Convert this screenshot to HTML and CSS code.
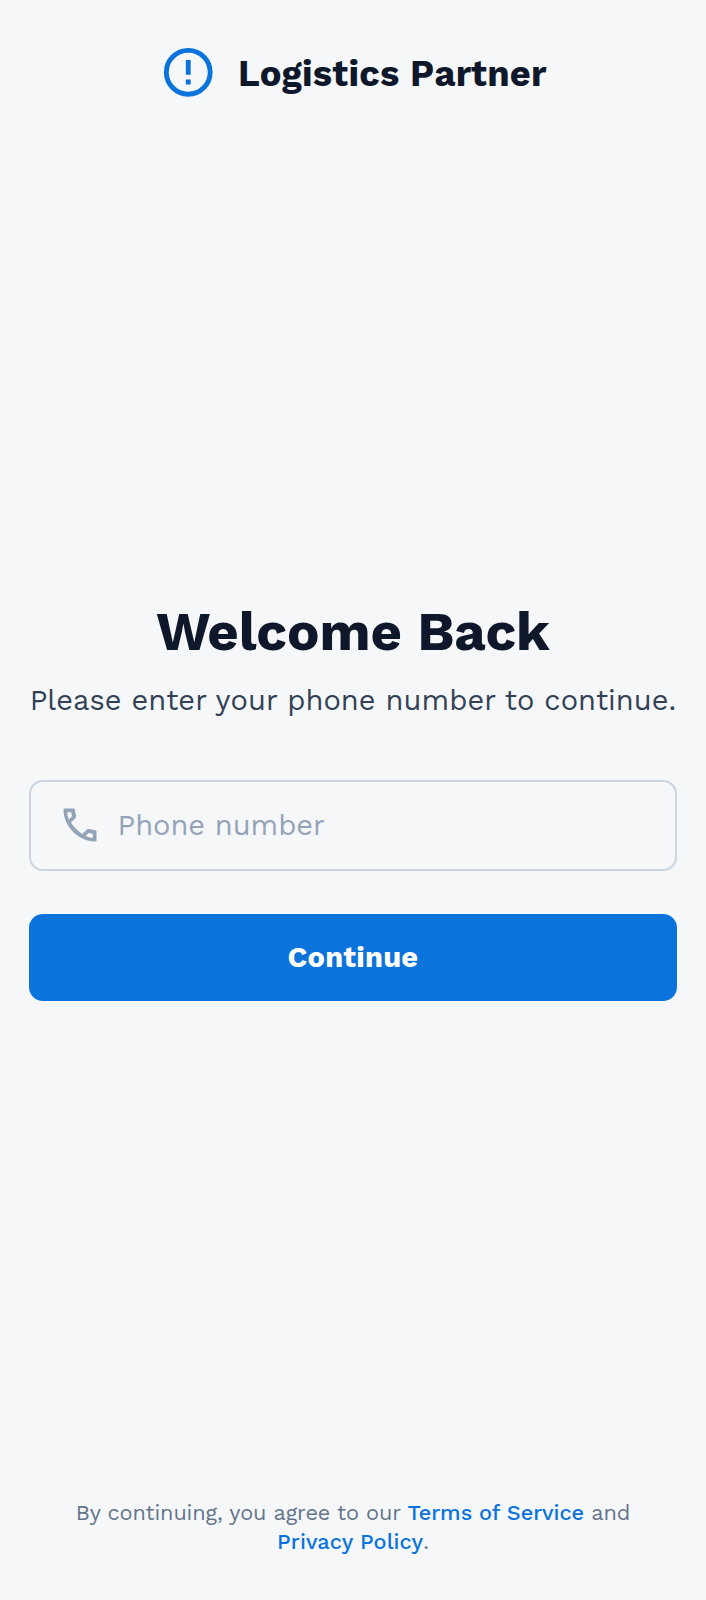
FILE: index.html
```html
<!DOCTYPE html>
<html lang="en">
<head>
<meta charset="utf-8">
<title>Logistics Partner</title>
<link rel="stylesheet" href="styles.css">
</head>
<body>
<div class="page">
  <header class="brand">
    <svg class="brand-icon" viewBox="0 0 24 24"><path d="M11 15h2v2h-2zm0-8h2v6h-2z"/><circle cx="12" cy="12" r="9"/></svg>
    <span class="brand-name">Logistics Partner</span>
  </header>
  <main class="login">
    <h1 class="title">Welcome Back</h1>
    <p class="subtitle">Please enter your phone number to continue.</p>
    <div class="field">
      <svg class="field-icon" viewBox="0 0 24 24"><path fill-rule="evenodd" d="M3.7 3H8.3C8.9 3 9.1 3.2 9.2 3.7L9.8 7C9.9 7.6 9.8 8 9.5 8.3L7.1 10.7C8.8 13.4 10.6 15.2 13.3 16.9L15.6 14.6C16 14.2 16.4 14.1 16.9 14.2L20.2 14.8C20.8 14.9 21 15.1 21 15.7V20.3C21 20.8 20.8 21 20.3 21C11.2 21 3 12.8 3 3.7C3 3.2 3.2 3 3.7 3ZM6 9L7.65 7.35L7.25 5H5C5.1 6.3 5.4 7.7 6 9ZM15 17.95C16.2 18.5 17.6 18.9 19 19V16.75L16.65 16.3Z"/></svg>
      <span class="placeholder">Phone number</span>
    </div>
    <button class="continue">Continue</button>
  </main>
  <footer class="legal">
    <p class="legal-line first">By continuing, you agree to our <a class="link">Terms of Service</a> and</p>
    <p class="legal-line second"><a class="link">Privacy Policy</a>.</p>
  </footer>
</div>
</body>
</html>
```
FILE: styles.css
```css
* { box-sizing: border-box; margin: 0; }
body {
  background: #f5f7f9;
  color: #0f172a;
  font-family: "Work Sans", Inter, "Liberation Sans", sans-serif;
}
.page {
  display: flex;
  flex-direction: column;
  height: 1600px;
  padding: 43px 29px 44px;
}
.brand {
  display: flex;
  align-items: center;
  height: 59px;
  padding-left: 130px;
  gap: 20.5px;
}
.brand-icon { width: 58.5px; height: 58.5px; fill: #0b73dc; flex: none; }
.brand-icon circle { fill: none; stroke: #0b73dc; stroke-width: 2; }
.brand-name {
  padding-top: 2px;
  font-size: 36.2px;
  font-weight: 700;
  line-height: 46px;
  letter-spacing: 0.25px;
  white-space: nowrap;
}
.login { display: flex; flex-direction: column; margin-top: 498px; }
.title {
  font-size: 54.3px;
  font-weight: 700;
  line-height: 64px;
  letter-spacing: -0.1px;
  text-align: center;
  white-space: nowrap;
}
.subtitle {
  margin-top: 16px;
  color: #334155;
  font-size: 29px;
  font-weight: 400;
  line-height: 40px;
  letter-spacing: 0.05px;
  text-align: center;
  white-space: nowrap;
}
.field {
  display: flex;
  align-items: center;
  gap: 16px;
  height: 91px;
  margin-top: 60px;
  padding: 0 0 2px 26.5px;
  border: 2px solid #cbd5e1;
  border-radius: 14px;
}
.field-icon { width: 44px; height: 44px; fill: #94a3b8; }
.placeholder {
  color: #94a3b8;
  font-size: 29px;
  letter-spacing: -0.05px;
  white-space: nowrap;
}
.continue {
  height: 87px;
  margin-top: 43px;
  padding-bottom: 3px;
  border: 0;
  border-radius: 14px;
  background: #0b73dc;
  color: #fff;
  font: inherit;
  font-size: 29px;
  font-weight: 700;
  letter-spacing: 0.25px;
}
.legal { margin-top: auto; color: #64748b; font-size: 21.7px; line-height: 29px; text-align: center; }
.legal-line { white-space: nowrap; }
.first { letter-spacing: -0.15px; }
.link { color: #0b73dc; font-weight: 500; }
.first .link { letter-spacing: -0.05px; }
.second .link { letter-spacing: 0.12px; }
```
